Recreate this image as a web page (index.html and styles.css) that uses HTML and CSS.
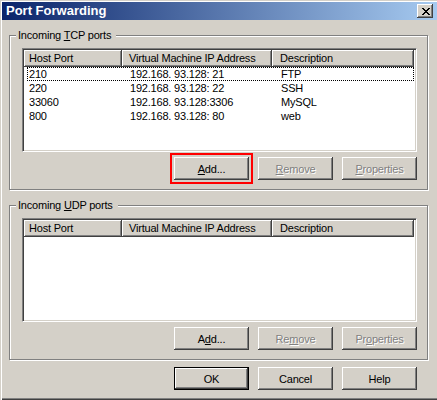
FILE: index.html
```html
<!DOCTYPE html>
<html lang="en">
<head>
    <meta charset="UTF-8">
    <title>Port Forwarding</title>
    <link rel="stylesheet" href="styles.css">
</head>
<body>
    <div class="window">
        <div class="titlebar">
            <span class="title">Port Forwarding</span>
            <span class="close">
                <svg width="8" height="7" viewBox="0 0 8 7" shape-rendering="crispEdges">
                    <path fill="#000" d="M0 0h2v1H0z M6 0h2v1H6z M1 1h2v1H1z M5 1h2v1H5z M2 2h4v1H2z M3 3h2v1H3z M2 4h4v1H2z M1 5h2v1H1z M5 5h2v1H5z M0 6h2v1H0z M6 6h2v1H6z"/>
                </svg>
            </span>
        </div>

        <fieldset class="group tcp">
            <legend>Incoming <u>T</u>CP ports</legend>
            <div class="listview">
                <div class="lv-header">
                    <div class="hcell c1">Host Port</div>
                    <div class="hcell c2">Virtual Machine IP Address</div>
                    <div class="hcell c3">Description</div>
                </div>
                <div class="lv-rows">
                    <div class="lv-row focused">
                        <span class="c1">210</span>
                        <span class="c2">192.168. 93.128: 21</span>
                        <span class="c3">FTP</span>
                    </div>
                    <div class="lv-row">
                        <span class="c1">220</span>
                        <span class="c2">192.168. 93.128: 22</span>
                        <span class="c3">SSH</span>
                    </div>
                    <div class="lv-row">
                        <span class="c1">33060</span>
                        <span class="c2">192.168. 93.128:3306</span>
                        <span class="c3">MySQL</span>
                    </div>
                    <div class="lv-row">
                        <span class="c1">800</span>
                        <span class="c2">192.168. 93.128: 80</span>
                        <span class="c3">web</span>
                    </div>
                </div>
            </div>
            <div class="buttons">
                <button class="btn marked"><u>A</u>dd...</button>
                <button class="btn" disabled><u>R</u>emove</button>
                <button class="btn" disabled><u>P</u>roperties</button>
            </div>
        </fieldset>

        <fieldset class="group udp">
            <legend>Incoming <u>U</u>DP ports</legend>
            <div class="listview">
                <div class="lv-header">
                    <div class="hcell c1">Host Port</div>
                    <div class="hcell c2">Virtual Machine IP Address</div>
                    <div class="hcell c3">Description</div>
                </div>
                <div class="lv-rows"></div>
            </div>
            <div class="buttons">
                <button class="btn">A<u>d</u>d...</button>
                <button class="btn" disabled>Re<u>m</u>ove</button>
                <button class="btn" disabled>Pr<u>o</u>perties</button>
            </div>
        </fieldset>

        <div class="dialog-buttons">
            <button class="btn default">OK</button>
            <button class="btn">Cancel</button>
            <button class="btn">Help</button>
        </div>
    </div>
</body>
</html>
```

FILE: styles.css
```css
html, body {
    margin: 0;
    padding: 0;
    overflow: hidden;
    background-color: #d4d0c8;
}
body {
    font-family: "Liberation Sans", Arial, sans-serif;
    font-size: 11px;
    letter-spacing: -0.2px;
    color: #000;
}
.window {
    width: 439px;
    height: 400px;
    box-sizing: border-box;
    padding: 2px;
    background: #d4d0c8;
    box-shadow: inset 1px 1px 0 #d4d0c8, inset 2px 2px 0 #fff,
                inset -1px -1px 0 #404040, inset -2px -2px 0 #808080;
}

/* title bar */
.titlebar {
    height: 18px;
    display: flex;
    align-items: center;
    justify-content: space-between;
    background: linear-gradient(to right, #0a246a, #a6caf0);
}
.title {
    color: #fff;
    font-weight: bold;
    font-size: 13px;
    letter-spacing: 0;
    padding-left: 4px;
    line-height: 18px;
}
.close {
    width: 16px;
    height: 14px;
    margin-right: 4px;
    display: flex;
    align-items: center;
    justify-content: center;
    background: #d4d0c8;
    box-shadow: inset -1px -1px 0 #404040, inset 1px 1px 0 #fff,
                inset -2px -2px 0 #808080;
}
.close svg {
    display: block;
    margin-left: 1px;
}

/* group boxes */
.group {
    width: 419px;
    box-sizing: border-box;
    margin: 9px 0 0 7px;
    padding: 6px 10px 9px 6px;
    border: 1px solid #808080;
    box-shadow: inset 1px 1px 0 #fff, 1px 1px 0 #fff;
    min-width: 0;
}
.group legend {
    padding: 0 5px 0 2px;
    line-height: 13px;
    background: #d4d0c8;
}

/* list view */
.listview {
    margin-left: 6px;
    width: 395px;
    height: 104px;
    box-sizing: border-box;
    padding: 1px;
    background: #fff;
    border: 1px solid;
    border-color: #808080 #fff #fff #808080;
    box-shadow: inset 1px 1px 0 #404040, inset -1px -1px 0 #d4d0c8;
    overflow: hidden;
}
.lv-header {
    display: grid;
    grid-template-columns: 98px 150px 142px;
    height: 17px;
}
.hcell {
    background: #d4d0c8;
    line-height: 17px;
    white-space: nowrap;
    overflow: hidden;
    box-shadow: inset -1px -1px 0 #404040, inset 1px 1px 0 #fff,
                inset -2px -2px 0 #808080;
}
.hcell.c1 { padding-left: 5px; }
.hcell.c2 { padding-left: 7px; }
.hcell.c3 { padding-left: 8px; }

.lv-row {
    display: grid;
    grid-template-columns: 95px 150px 142px;
    margin-left: 3px;
    width: 387px;
    height: 14px;
    box-sizing: border-box;
    line-height: 12px;
    border: 1px solid transparent;
    white-space: pre;
}
.lv-row.focused {
    border: 1px dotted #000;
}
.lv-row .c1 { padding-left: 1px; }
.lv-row .c2 { padding-left: 7px; }
.lv-row .c3 { padding-left: 8px; }

/* buttons */
.buttons, .dialog-buttons {
    display: flex;
    justify-content: flex-end;
    gap: 9px;
}
.buttons {
    margin-top: 5px;
}
.dialog-buttons {
    width: 415px;
    margin-top: 7px;
}
.btn {
    width: 75px;
    height: 23px;
    padding: 0;
    border: none;
    background: #d4d0c8;
    font-family: inherit;
    font-size: 11px;
    letter-spacing: -0.2px;
    color: #000;
    box-shadow: inset -1px -1px 0 #404040, inset 1px 1px 0 #fff,
                inset -2px -2px 0 #808080;
}
.btn:disabled {
    color: #808080;
    text-shadow: 1px 1px 0 #fff;
}
.btn.default {
    box-shadow: inset 0 0 0 1px #000, inset -2px -2px 0 #404040,
                inset 2px 2px 0 #fff, inset -3px -3px 0 #808080;
}
.btn.marked {
    outline: 2px solid #f00;
    outline-offset: 2px;
}
```
